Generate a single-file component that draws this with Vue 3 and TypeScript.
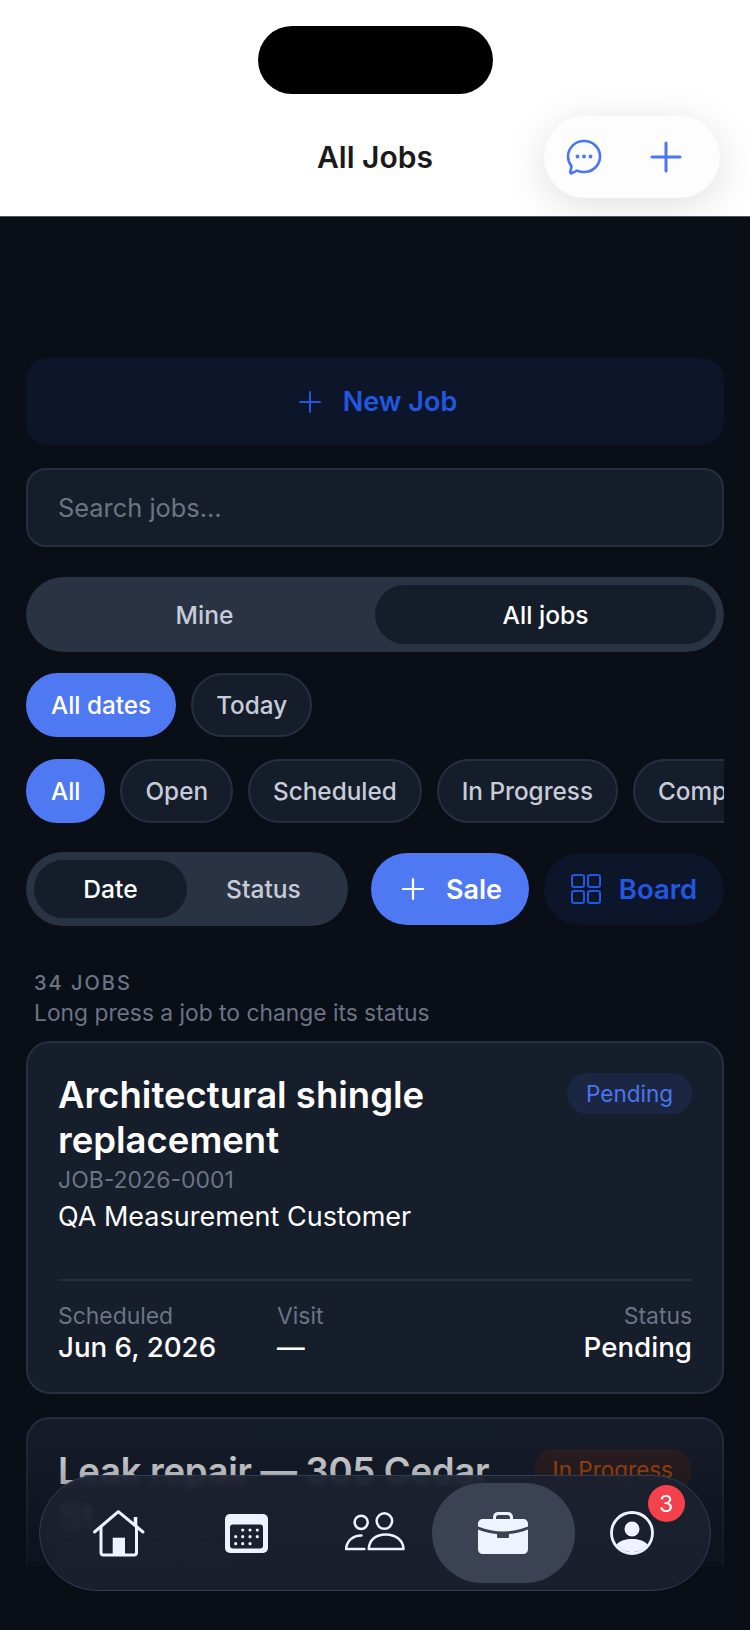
<script setup lang="ts">
import { ref } from 'vue'

const search = ref<string>('')
const dateChips: string[] = ['All dates', 'Today']
const statusChips: string[] = ['All', 'Open', 'Scheduled', 'In Progress', 'Completed']
const calendarDots: number[][] = [
  [17.7, 16], [25, 16], [32.3, 16],
  [10.7, 22.7], [17.7, 22.7], [25, 22.7], [32.3, 22.7],
  [10.7, 29.7], [17.7, 29.7], [25, 29.7],
]
</script>

<template>
  <div class="page">
    <header class="top">
      <div class="island"></div>
      <h1 class="title">All Jobs</h1>
      <div class="actions">
        <svg width="38" height="38" viewBox="0 0 38 38" fill="none" stroke="#4a76f0" stroke-width="2.6" stroke-linejoin="round">
          <path d="M19 3C10 3 3 10 3 18.5c0 3.700 1.300 7 3.500 9.700L5.300 34c-.2 1 .6 1.600 1.500 1.200l5.400-2.600c2.100.9 4.400 1.400 6.800 1.400 9 0 16-6.900 16-15.500S28 3 19 3z" />
          <circle cx="12.500" cy="18.500" r="1.900" fill="#4a76f0" stroke="none" />
          <circle cx="19" cy="18.500" r="1.900" fill="#4a76f0" stroke="none" />
          <circle cx="25.500" cy="18.500" r="1.900" fill="#4a76f0" stroke="none" />
        </svg>
        <svg width="32" height="32" viewBox="0 0 32 32" fill="none" stroke="#4a76f0" stroke-width="3" stroke-linecap="round">
          <path d="M16 2v28M2 16h28" />
        </svg>
      </div>
    </header>

    <main class="content">
      <button class="new-job">
        <svg width="24" height="24" viewBox="0 0 24 24" fill="none" stroke="#2257e0" stroke-width="2" stroke-linecap="round">
          <path d="M12 2v20M2 12h20" />
        </svg>
        <span>New Job</span>
      </button>

      <input v-model="search" class="search" type="text" placeholder="Search jobs..." />

      <div class="segment wide">
        <span class="seg-item">Mine</span>
        <span class="seg-item on">All jobs</span>
      </div>

      <div class="chips first">
        <span v-for="(c, i) in dateChips" :key="c" class="chip" :class="{ on: i === 0 }">{{ c }}</span>
      </div>
      <div class="chips second">
        <span v-for="(c, i) in statusChips" :key="c" class="chip" :class="{ on: i === 0 }">{{ c }}</span>
      </div>

      <div class="tools">
        <div class="segment narrow">
          <span class="seg-item on">Date</span>
          <span class="seg-item">Status</span>
        </div>
        <button class="sale">
          <svg width="24" height="24" viewBox="0 0 24 24" fill="none" stroke="#fff" stroke-width="2.200" stroke-linecap="round">
            <path d="M12 2v20M2 12h20" />
          </svg>
          <span>Sale</span>
        </button>
        <button class="board">
          <svg width="30" height="30" viewBox="0 0 30 30" fill="none" stroke="#2257e0" stroke-width="2">
            <rect x="1" y="1" width="12" height="12" rx="2" />
            <rect x="17" y="1" width="12" height="12" rx="2" />
            <rect x="1" y="17" width="12" height="12" rx="2" />
            <rect x="17" y="17" width="12" height="12" rx="2" />
          </svg>
          <span>Board</span>
        </button>
      </div>

      <div class="count">34 JOBS</div>
      <div class="hint">Long press a job to change its status</div>

      <article class="card">
        <div class="card-head">
          <h2>Architectural shingle replacement</h2>
          <span class="badge pending">Pending</span>
        </div>
        <div class="job-no">JOB-2026-0001</div>
        <div class="customer">QA Measurement Customer</div>
        <div class="card-foot">
          <div>
            <div class="label">Scheduled</div>
            <div class="value">Jun 6, 2026</div>
          </div>
          <div>
            <div class="label">Visit</div>
            <div class="value">—</div>
          </div>
          <div class="right">
            <div class="label">Status</div>
            <div class="value">Pending</div>
          </div>
        </div>
      </article>

      <article class="card next">
        <div class="card-head">
          <h2>Leak repair — 305 Cedar St</h2>
          <span class="badge progress">In Progress</span>
        </div>
        <div class="job-no">JOB-2026-1004</div>
      </article>

      <div class="scrim"></div>
    </main>

    <nav class="tabbar">
      <div class="tab">
        <svg width="56" height="56" viewBox="0 0 56 56" fill="none" stroke="#eef3ff" stroke-width="3" stroke-linecap="round" stroke-linejoin="round">
          <path d="M4.500 27 28.300 6.700 53 27" />
          <path d="M45.500 12v9" stroke-width="3.600" stroke-linecap="butt" />
          <path d="M11 21.500V47.500c0 1.500 1 2.500 2.500 2.500h30.500c1.500 0 2.500-1 2.500-2.500V21.500" />
          <rect x="22.700" y="32.700" width="12.300" height="17.300" fill="#eef3ff" stroke="none" />
        </svg>
      </div>
      <div class="tab">
        <svg width="43" height="39" viewBox="0 0 43 39">
          <rect width="43" height="39" rx="5" fill="#eef3ff" />
          <rect x="5" y="10.500" width="33" height="24" rx="3" fill="#1c2130" />
          <circle v-for="d in calendarDots" :key="d.join()" :cx="d[0]" :cy="d[1]" r="1.600" fill="#eef3ff" />
        </svg>
      </div>
      <div class="tab">
        <svg width="60" height="42" viewBox="10 14 62 42" fill="none" stroke="#eef3ff" stroke-width="2.600" stroke-linecap="round" stroke-linejoin="round">
          <circle cx="26.700" cy="24" r="6.800" />
          <circle cx="50.700" cy="22.700" r="8" />
          <path d="M34.500 51.500C35 42 42 36.500 52 36.500S70 42 70.500 51.500Z" />
          <path d="M27 37.500C18 37.500 12 43 11 51.500H30" />
        </svg>
      </div>
      <div class="tab active">
        <svg width="50" height="42" viewBox="0 0 50 42">
          <path d="M16.500 9V5.500C16.500 3 18 1.500 20.500 1.500h9c2.500 0 4 1.500 4 4V9" fill="none" stroke="#eef3ff" stroke-width="3" />
          <path d="M0 12c0-3 2-5 5-5h40c3 0 5 2 5 5v2.500C41 18 33 19.500 25 19.500S9 18 0 14.500Z" fill="#eef3ff" />
          <path d="M0 17.500C6 20 13 21.500 19 22v2.500c0 1 .8 1.500 1.500 1.500h9c.7 0 1.500-.5 1.500-1.500V22c6-.5 13-2 19-4.500V37c0 3-2 5-5 5H5c-3 0-5-2-5-5Z" fill="#eef3ff" />
        </svg>
      </div>
      <div class="tab">
        <svg width="44" height="44" viewBox="0 0 44 44">
          <circle cx="22" cy="22" r="20.500" fill="none" stroke="#eef3ff" stroke-width="2.800" />
          <circle cx="22" cy="18" r="7.500" fill="#eef3ff" />
          <path d="M6.500 33.500C10 29.500 15.500 28 22 28s12 1.500 15.500 5.500C34 38.500 28.500 41 22 41S10 38.500 6.500 33.500Z" fill="#eef3ff" />
        </svg>
        <span class="dot">3</span>
      </div>
    </nav>
  </div>
</template>

<style scoped>
.page {
  position: relative;
  width: 750px;
  height: 1630px;
  overflow: hidden;
  background: #0a0e17;
  font-family: Inter, "Liberation Sans", sans-serif;
}

.top {
  position: relative;
  height: 217px;
  box-sizing: border-box;
  padding-top: 26px;
  background: #fff;
  border-bottom: 1px solid #55585f;
  overflow: hidden;
  display: flex;
  flex-direction: column;
  align-items: center;
}

.island {
  width: 235px;
  height: 68px;
  border-radius: 34px;
  background: #000;
}

.title {
  margin: 45px 0 0;
  font-size: 30px;
  line-height: 36px;
  font-weight: 600;
  color: #1a1a1c;
}

.actions {
  position: absolute;
  left: 544px;
  top: 116px;
  width: 176px;
  height: 82px;
  border-radius: 41px;
  background: #fdfdfe;
  box-shadow: 0 8px 40px rgba(0, 0, 0, 0.13);
  display: flex;
  align-items: center;
  gap: 47px;
  padding-left: 21px;
  box-sizing: border-box;
}

.content {
  position: relative;
  height: 1349px;
  overflow: hidden;
  box-sizing: border-box;
  padding: 141px 26px 0;
}

button {
  border: none;
  font-family: inherit;
  padding: 0;
}

.new-job {
  width: 100%;
  height: 87px;
  box-sizing: border-box;
  padding-left: 5px;
  border-radius: 22px;
  background: #0c1529;
  display: flex;
  align-items: center;
  justify-content: center;
  gap: 21px;
  color: #2257e0;
  font-size: 27px;
  font-weight: 600;
}

.search {
  display: block;
  width: 100%;
  height: 79px;
  margin-top: 23px;
  box-sizing: border-box;
  padding: 0 30px;
  border: 2px solid #262f40;
  border-radius: 20px;
  background: #161d2a;
  color: #fff;
  font-family: inherit;
  font-size: 25.400px;
  outline: none;
}

.search::placeholder {
  color: #6b7485;
  opacity: 1;
}

.segment {
  display: flex;
  box-sizing: border-box;
  padding: 8px;
  background: #2a3344;
  border-radius: 38px;
}

.segment.wide {
  margin-top: 30px;
  height: 75px;
}

.segment.narrow {
  width: 322px;
  height: 74px;
  flex-shrink: 0;
}

.seg-item {
  flex: 1;
  display: flex;
  align-items: center;
  justify-content: center;
  border-radius: 30px;
  color: #c6ccd8;
  font-size: 24.600px;
  font-weight: 500;
}

.seg-item.on {
  background: #151c2a;
  color: #fff;
}

.chips {
  display: flex;
  gap: 15px;
  overflow: hidden;
}

.chips.first {
  margin-top: 21px;
}

.chips.second {
  margin-top: 22px;
}

.chip {
  flex-shrink: 0;
  height: 64px;
  box-sizing: border-box;
  padding: 0 23px;
  display: flex;
  align-items: center;
  border: 2px solid #262f40;
  border-radius: 32px;
  background: #161d2a;
  color: #c6ccd8;
  font-size: 24.300px;
  font-weight: 500;
}

.chip.on {
  background: #4f78f3;
  border-color: #4f78f3;
  color: #fff;
}

.tools {
  margin-top: 29px;
  display: flex;
  align-items: center;
}

.sale,
.board {
  height: 72px;
  box-sizing: border-box;
  border-radius: 36px;
  display: flex;
  align-items: center;
  justify-content: center;
  font-weight: 600;
}

.sale {
  width: 158px;
  margin-left: 23px;
  padding-left: 3px;
  gap: 21px;
  background: #4f78f3;
  color: #fff;
  font-size: 27px;
}

.board {
  width: 180px;
  margin-left: 15px;
  gap: 18px;
  background: #0c1529;
  color: #2257e0;
  font-size: 27.500px;
}

.count {
  margin: 43px 0 0 8px;
  font-size: 20px;
  line-height: 28px;
  font-weight: 500;
  letter-spacing: 2px;
  color: #6b7485;
}

.hint {
  margin: 2px 0 0 8px;
  font-size: 22.800px;
  line-height: 28px;
  color: #6b7485;
}

.card {
  margin-top: 14px;
  box-sizing: border-box;
  height: 353px;
  padding: 30px 30px 0;
  border: 2px solid #262f40;
  border-radius: 24px;
  background: #161d2b;
}

.card.next {
  margin-top: 23px;
  height: 260px;
}

.card-head {
  display: flex;
  justify-content: space-between;
  align-items: flex-start;
}

.card h2 {
  width: 440px;
  margin: 0;
  font-size: 36.500px;
  line-height: 45px;
  font-weight: 600;
  color: #fff;
}

.card.next h2 {
  letter-spacing: -0.3px;
}

.badge {
  flex-shrink: 0;
  height: 41px;
  padding: 0 19px;
  display: flex;
  align-items: center;
  border-radius: 21px;
  font-size: 22.500px;
}

.badge.pending {
  background: #1b2742;
  color: #4a76f0;
}

.badge.progress {
  background: #2f2022;
  color: #c2500f;
}

.job-no {
  margin-top: 2px;
  font-size: 23px;
  line-height: 30px;
  color: #6b7485;
}

.customer {
  margin-top: 5px;
  font-size: 27px;
  line-height: 34px;
  color: #fff;
}

.card-foot {
  margin-top: 45px;
  padding-top: 21px;
  border-top: 2px solid #262f40;
  display: grid;
  grid-template-columns: 219px 1fr auto;
}

.label {
  font-size: 22.900px;
  line-height: 29px;
  color: #6b7485;
}

.value {
  font-size: 27.700px;
  line-height: 32px;
  font-weight: 500;
  color: #fff;
}

.right {
  text-align: right;
}

.scrim {
  position: absolute;
  left: 0;
  right: 0;
  bottom: 0;
  height: 160px;
  background: linear-gradient(rgba(10, 14, 23, 0), rgba(10, 14, 23, 0.75));
  pointer-events: none;
}

.tabbar {
  position: absolute;
  left: 39px;
  top: 1475px;
  width: 672px;
  height: 116px;
  box-sizing: border-box;
  padding: 0 14px;
  display: grid;
  grid-template-columns: repeat(5, 1fr);
  border: 1.500px solid #2e3c5a;
  border-radius: 58px;
  background: rgba(28, 33, 48, 0.9);
  backdrop-filter: blur(3px);
}

.tab {
  position: relative;
  display: flex;
  align-items: center;
  justify-content: center;
}

.tab svg {
  position: relative;
}

.tab.active::before {
  content: "";
  position: absolute;
  left: -7px;
  right: -7px;
  top: 7px;
  bottom: 7px;
  border-radius: 50px;
  background: #3b4254;
}

.dot {
  position: absolute;
  left: 80px;
  top: 9px;
  width: 37px;
  height: 37px;
  border-radius: 50%;
  background: #f5414b;
  color: #fff;
  font-size: 23px;
  display: flex;
  align-items: center;
  justify-content: center;
}
</style>

<style>
html,
body {
  background: #0a0e17;
}
</style>
